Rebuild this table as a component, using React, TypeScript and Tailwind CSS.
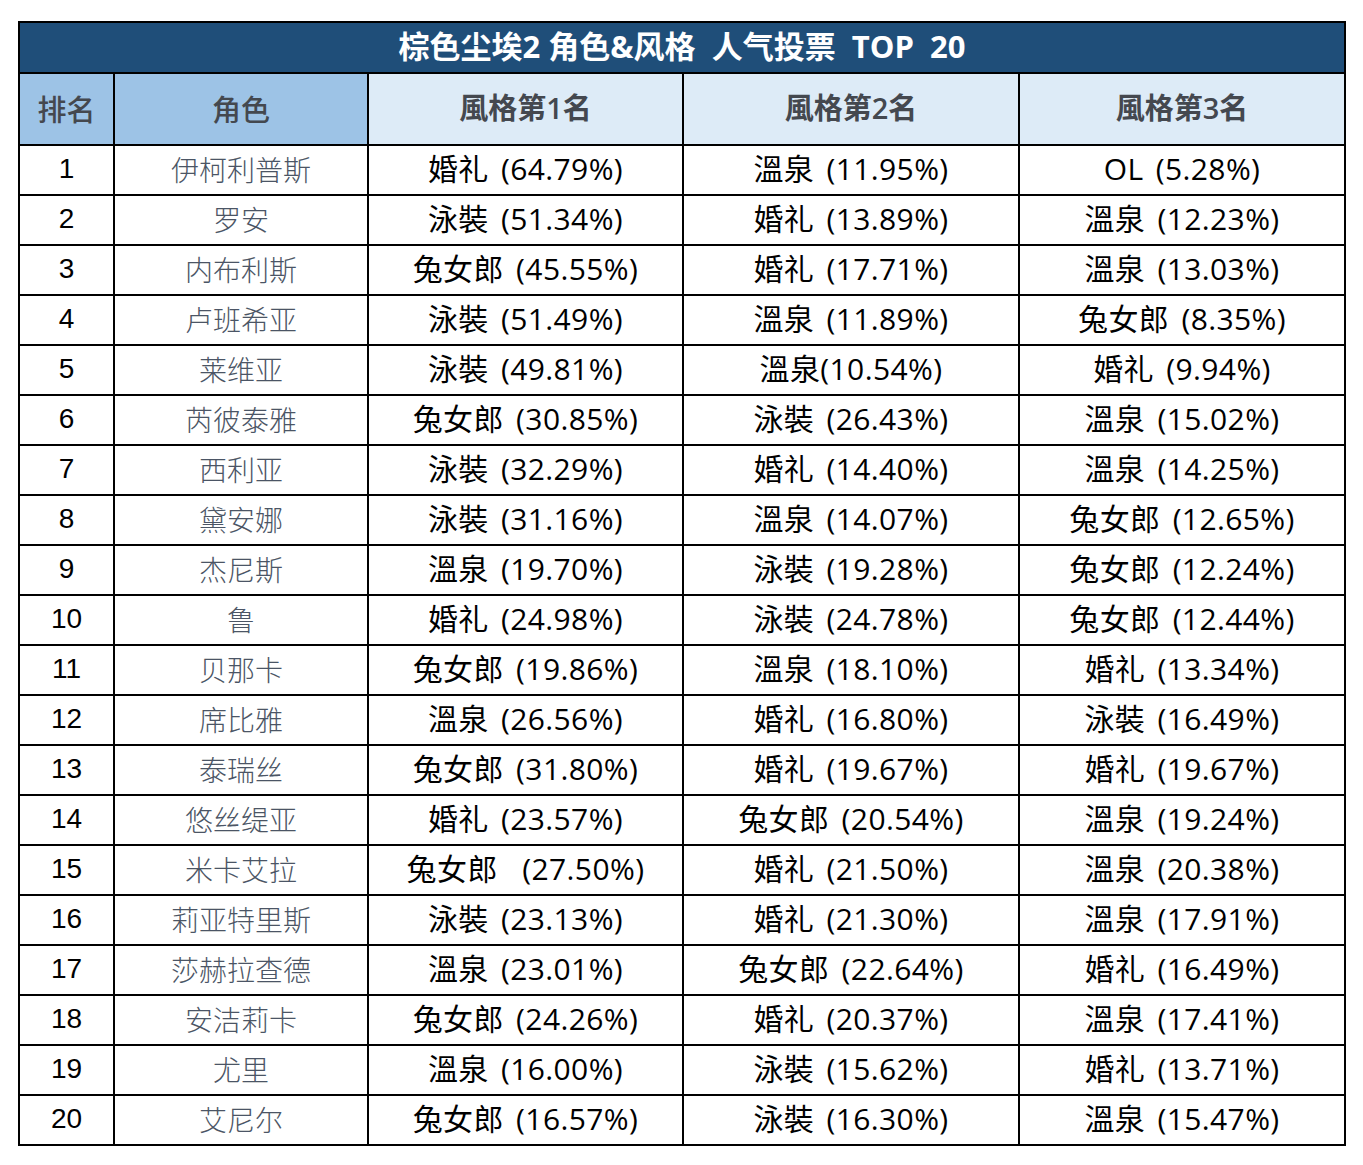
const rows: [string, string, string, string][] = [
  ['伊柯利普斯', '婚礼 (64.79%)', '溫泉 (11.95%)', 'OL (5.28%)'],
  ['罗安', '泳裝 (51.34%)', '婚礼 (13.89%)', '溫泉 (12.23%)'],
  ['内布利斯', '兔女郎 (45.55%)', '婚礼 (17.71%)', '溫泉 (13.03%)'],
  ['卢班希亚', '泳裝 (51.49%)', '溫泉 (11.89%)', '兔女郎 (8.35%)'],
  ['莱维亚', '泳裝 (49.81%)', '溫泉(10.54%)', '婚礼 (9.94%)'],
  ['芮彼泰雅', '兔女郎 (30.85%)', '泳裝 (26.43%)', '溫泉 (15.02%)'],
  ['西利亚', '泳裝 (32.29%)', '婚礼 (14.40%)', '溫泉 (14.25%)'],
  ['黛安娜', '泳裝 (31.16%)', '溫泉 (14.07%)', '兔女郎 (12.65%)'],
  ['杰尼斯', '溫泉 (19.70%)', '泳裝 (19.28%)', '兔女郎 (12.24%)'],
  ['鲁', '婚礼 (24.98%)', '泳裝 (24.78%)', '兔女郎 (12.44%)'],
  ['贝那卡', '兔女郎 (19.86%)', '溫泉 (18.10%)', '婚礼 (13.34%)'],
  ['席比雅', '溫泉 (26.56%)', '婚礼 (16.80%)', '泳裝 (16.49%)'],
  ['泰瑞丝', '兔女郎 (31.80%)', '婚礼 (19.67%)', '婚礼 (19.67%)'],
  ['悠丝缇亚', '婚礼 (23.57%)', '兔女郎 (20.54%)', '溫泉 (19.24%)'],
  ['米卡艾拉', '兔女郎  (27.50%)', '婚礼 (21.50%)', '溫泉 (20.38%)'],
  ['莉亚特里斯', '泳裝 (23.13%)', '婚礼 (21.30%)', '溫泉 (17.91%)'],
  ['莎赫拉查德', '溫泉 (23.01%)', '兔女郎 (22.64%)', '婚礼 (16.49%)'],
  ['安洁莉卡', '兔女郎 (24.26%)', '婚礼 (20.37%)', '溫泉 (17.41%)'],
  ['尤里', '溫泉 (16.00%)', '泳裝 (15.62%)', '婚礼 (13.71%)'],
  ['艾尼尔', '兔女郎 (16.57%)', '泳裝 (16.30%)', '溫泉 (15.47%)'],
]

const cjk = "font-['Open_Sans','Noto_Sans_CJK_SC',sans-serif]"
const cell = 'border-2 border-black text-center p-0'
const style = `${cell} ${cjk} whitespace-pre pb-[3px] text-[30px] leading-[40px] tracking-[0.4px] [word-spacing:4px] text-black`

export default function App() {
  return (
    <div className="min-h-screen bg-white pl-[18px] pt-[21px]">
      <table className="w-[1326px] table-fixed border-collapse border-2 border-black">
        <colgroup>
          <col className="w-[95px]" />
          <col className="w-[254px]" />
          <col className="w-[315px]" />
          <col className="w-[336px]" />
          <col className="w-[326px]" />
        </colgroup>
        <thead>
          <tr className="h-[51px]">
            <th
              colSpan={5}
              className={`${cell} bg-[#1f4e79] pb-[4px] text-[31px] leading-[40px] font-bold text-white ${cjk} whitespace-pre`}
            >
              棕色尘埃2 角色&amp;风格  人气投票  TOP  20
            </th>
          </tr>
          <tr className="h-[72px] text-[29px] leading-[40px] text-[#44484f]">
            <th className={`${cell} bg-[#9dc3e6] pb-[2px] font-['Noto_Sans_CJK_SC',sans-serif] font-medium`}>排名</th>
            <th className={`${cell} bg-[#9dc3e6] pb-[2px] font-['Noto_Sans_CJK_SC',sans-serif] font-medium`}>角色</th>
            <th className={`${cell} bg-[#ddebf7] pb-[2px] ${cjk} font-semibold`}>風格第1名</th>
            <th className={`${cell} bg-[#ddebf7] pb-[2px] ${cjk} font-semibold`}>風格第2名</th>
            <th className={`${cell} bg-[#ddebf7] pb-[2px] ${cjk} font-semibold`}>風格第3名</th>
          </tr>
        </thead>
        <tbody>
          {rows.map((r, i) => (
            <tr key={i} className="h-[50px]">
              <td className={`${cell} pb-[2px] font-['Liberation_Sans',sans-serif] text-[28px] leading-[40px] text-black`}>{i + 1}</td>
              <td className={`${cell} pb-[3px] font-['Noto_Sans_CJK_SC',sans-serif] text-[28px] leading-[40px] font-light text-[#4b5565]`}>{r[0]}</td>
              <td className={style}>{r[1]}</td>
              <td className={style}>{r[2]}</td>
              <td className={style}>{r[3]}</td>
            </tr>
          ))}
        </tbody>
      </table>
    </div>
  )
}
